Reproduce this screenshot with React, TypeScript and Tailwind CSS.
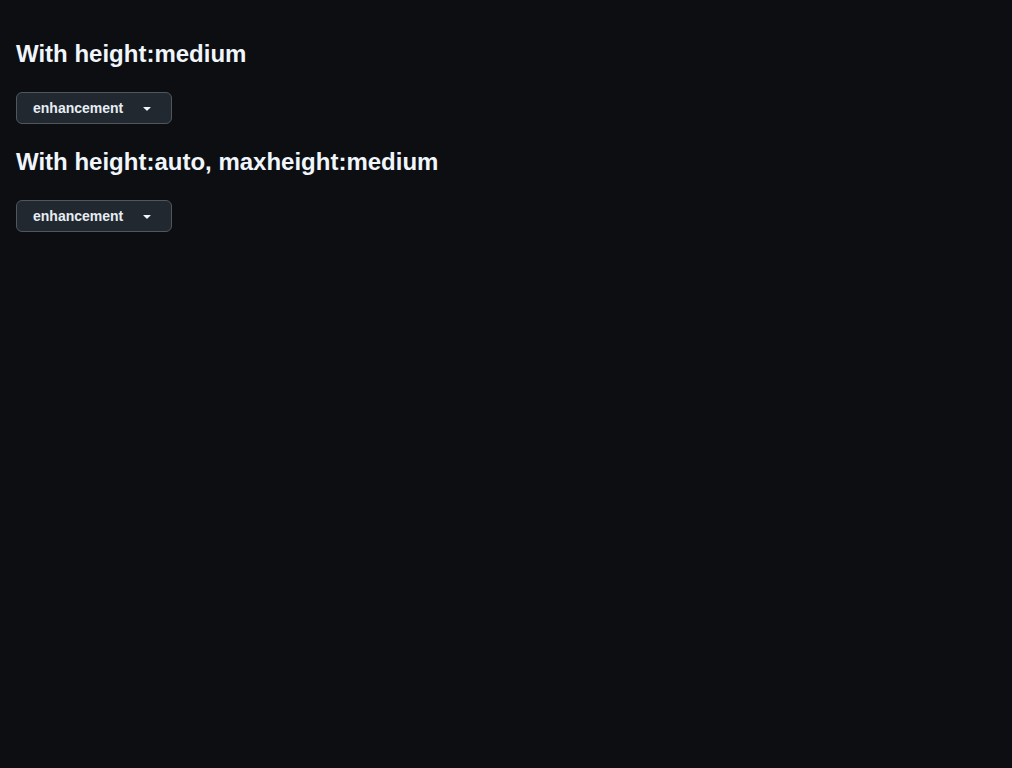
export default function App() {
  const sections = ['With height:medium', 'With height:auto, maxheight:medium'];

  return (
    <div
      className="min-h-screen bg-[#0c0e12] p-4 text-[#e6edf3]"
      style={{ fontFamily: '"Liberation Sans", Arial, sans-serif' }}
    >
      {sections.map((title) => (
        <div key={title}>
          <h2 className="my-5 text-2xl font-bold leading-9 text-[#f0f6fc]">{title}</h2>
          <button
            type="button"
            className="flex h-8 items-center gap-4 rounded-md border border-[#50565e] bg-[#212830] px-4 text-sm font-semibold text-[#e6edf3]"
          >
            <span>enhancement</span>
            <svg viewBox="0 0 16 16" width="16" height="16" fill="currentColor" className="text-[#f0f6fc]">
              <path d="m4.427 7.427 3.396 3.396a.25.25 0 0 0 .354 0l3.396-3.396A.25.25 0 0 0 11.396 7H4.604a.25.25 0 0 0-.177.427Z" />
            </svg>
          </button>
        </div>
      ))}
    </div>
  );
}
